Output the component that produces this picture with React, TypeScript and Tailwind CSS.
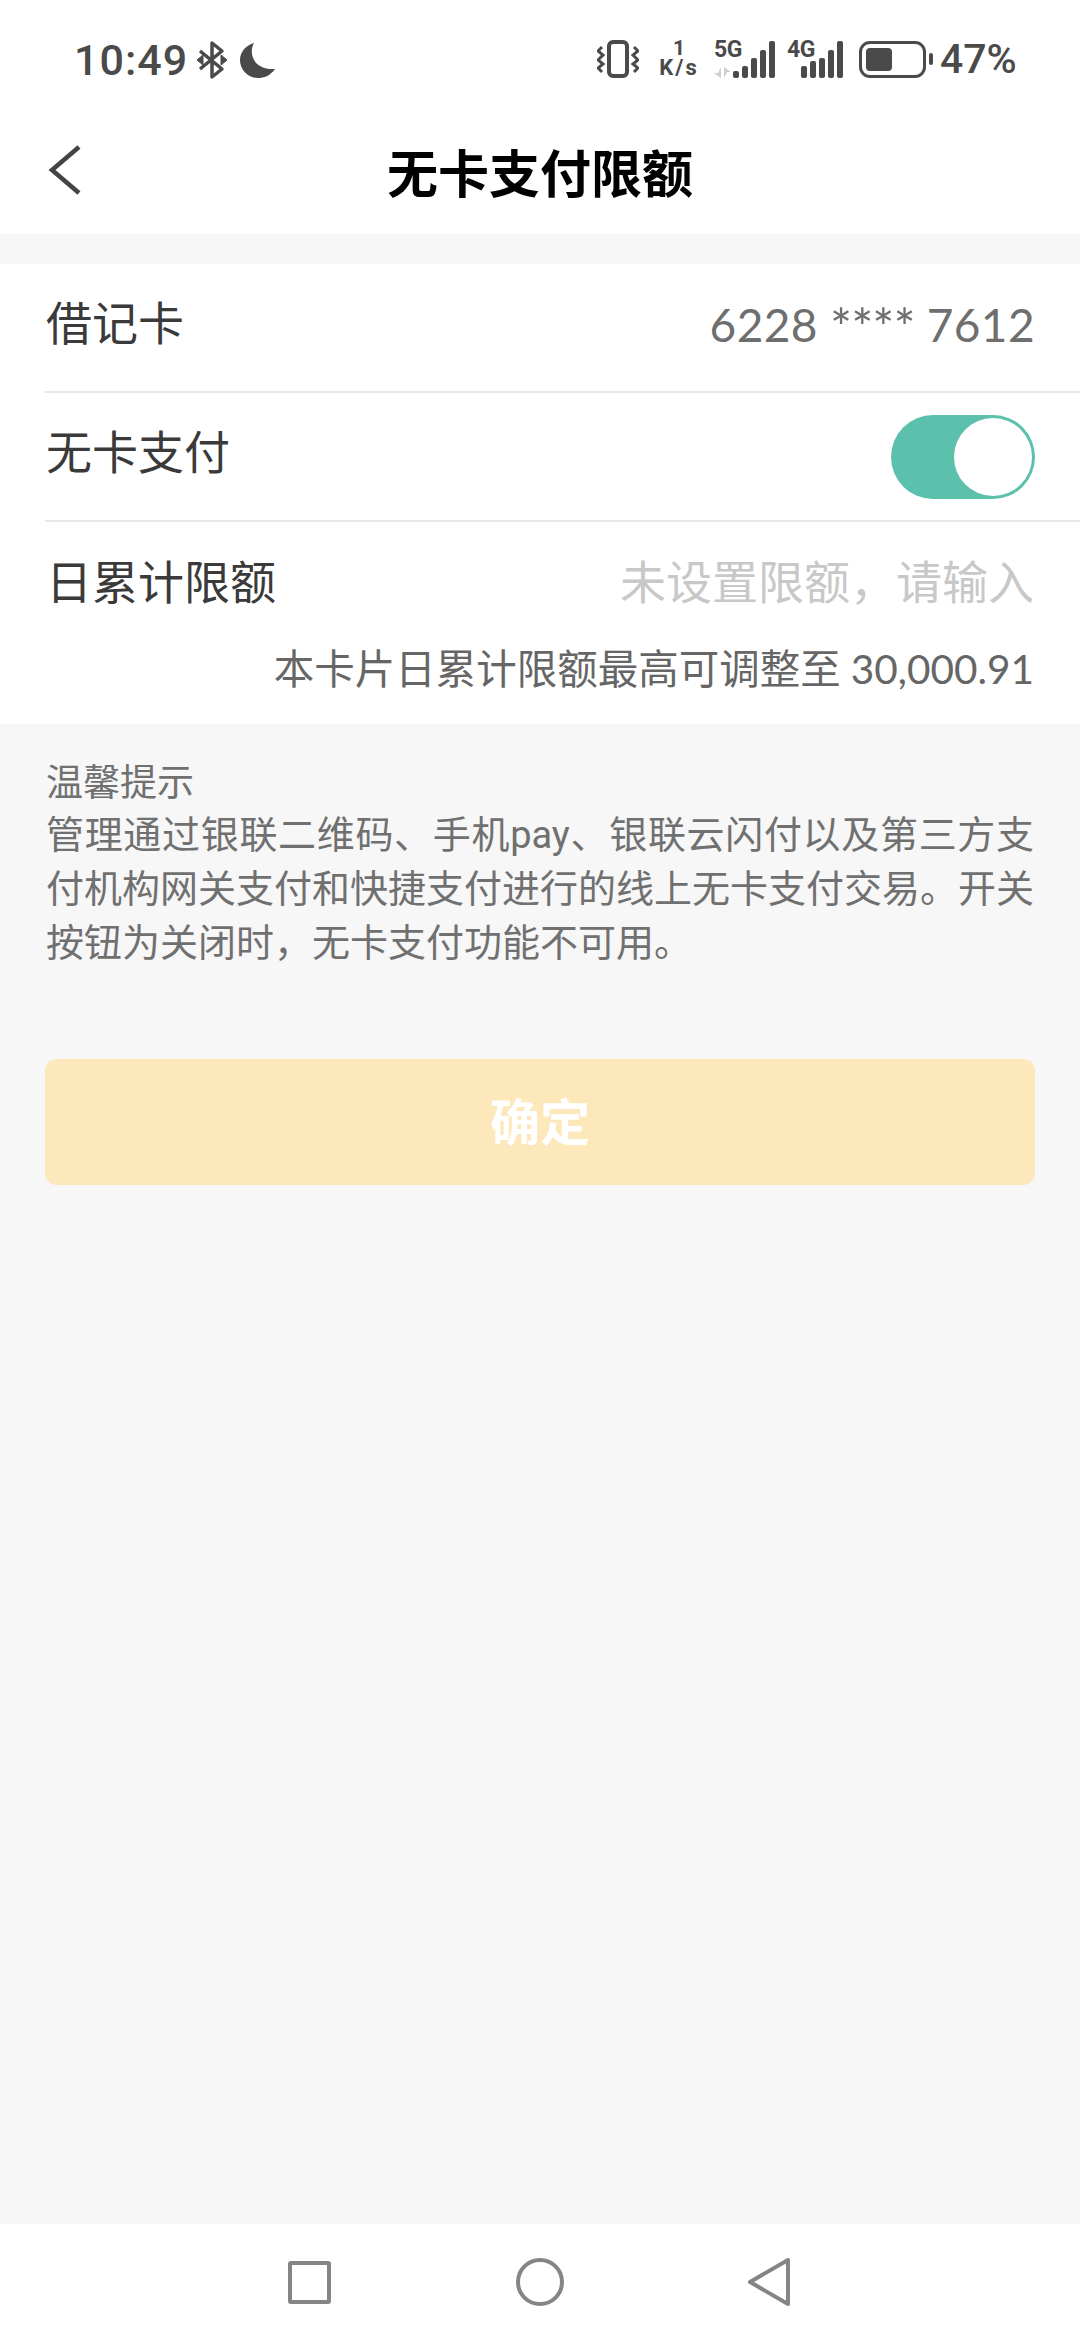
const cjk = "font-['Roboto','Noto_Sans_CJK_SC',sans-serif]"

function SignalBars({ bars }: { bars: number[] }) {
    return (
        <div className="flex items-end gap-[3px]">
            {bars.map((h, i) => (
                <div key={i} className="w-[6px] rounded-[2px] bg-[#4a4a4a]" style={{ height: h }} />
            ))}
        </div>
    )
}

function StatusBar() {
    return (
        <div className="flex h-[78px] items-start justify-between pt-[40px] pl-[74px] pr-[66px] box-content">
            <div className="flex items-center">
                <span className="font-['Roboto',sans-serif] text-[43px] leading-[38px] font-medium tracking-[1px] text-[#4a4a4a]">10:49</span>
                <svg className="ml-[9px]" width="30" height="40" viewBox="0 0 30 40" fill="none" stroke="#4a4a4a" strokeWidth="3.5" strokeLinejoin="round">
                    <path d="M3 11 L25 29 L15 37 V3 L25 11 L3 29" />
                    <path d="M0 20 L6 15 V25 Z M30 20 L24 15 V25 Z" fill="#4a4a4a" strokeWidth="1" />
                </svg>
                <svg className="ml-[12px]" width="37" height="37" viewBox="0 0 37 37" fill="#4a4a4a">
                    <path d="M15 1 C9 12 15 28 36 27 C31 34 25 36 19 36 C9 36 1 28 1 18 C1 10 7 3 15 1 Z" />
                </svg>
            </div>
            <div className="flex items-start">
                <svg width="42" height="38" viewBox="0 0 42 38" fill="none" stroke="#4a4a4a" strokeWidth="3">
                    <rect x="12" y="2" width="18" height="34" rx="4" strokeWidth="4" />
                    <path d="M5 7 L1 11 L6 15 L1 20 L6 24 L1 28 L5 32 M37 7 L41 11 L36 15 L41 20 L36 24 L41 28 L37 32" />
                </svg>
                <div className="ml-[20px] flex w-[40px] flex-col items-center font-['Roboto',sans-serif] font-bold text-[#4a4a4a]">
                    <span className="text-[21px] leading-[17px]">1</span>
                    <span className="text-[22px] leading-[21px] tracking-[2px] whitespace-nowrap">K/s</span>
                </div>
                <div className="relative ml-[15px] h-[38px] w-[61px]">
                    <span className="absolute left-0 top-0 font-['Roboto',sans-serif] text-[23px] leading-[20px] font-bold tracking-[-0.5px] text-[#4a4a4a]">5G</span>
                    <svg className="absolute left-0 bottom-0" width="17" height="11" viewBox="0 0 17 11" fill="#cfcfcf">
                        <path d="M7 0 V11 L0 6 H4 Z M10 11 V0 L17 5 H13 Z" />
                    </svg>
                    <div className="absolute right-0 bottom-0">
                        <SignalBars bars={[7, 12, 20, 28, 37]} />
                    </div>
                </div>
                <div className="relative ml-[12px] h-[38px] w-[56px]">
                    <span className="absolute left-0 top-0 font-['Roboto',sans-serif] text-[23px] leading-[20px] font-bold tracking-[-0.5px] text-[#4a4a4a]">4G</span>
                    <div className="absolute right-0 bottom-0">
                        <SignalBars bars={[12, 17, 20, 28, 37]} />
                    </div>
                </div>
                <div className="ml-[16px] flex h-[38px] items-center">
                    <div className="flex h-[37px] w-[67px] items-center rounded-[11px] border-[3px] border-[#4a4a4a] pl-[4px]">
                        <div className="h-[23px] w-[26px] rounded-[4px] bg-[#4a4a4a]" />
                    </div>
                    <div className="ml-[3px] h-[12px] w-[4px] rounded-[2px] bg-[#4a4a4a]" />
                </div>
                <span className="ml-[7px] w-[74px] font-['Roboto',sans-serif] text-[41px] leading-[38px] font-medium whitespace-nowrap text-[#4a4a4a]">47%</span>
            </div>
        </div>
    )
}

export default function App() {
    return (
        <div className={`flex h-[2340px] w-[1080px] flex-col bg-[#f7f7f7] ${cjk}`}>
            <div className="bg-white">
                <StatusBar />
                {/* Header */}
                <div className="relative flex h-[116px] items-center justify-center">
                    <svg className="absolute left-[46px] top-[26px]" width="38" height="54" viewBox="0 0 38 54" fill="none" stroke="#444444" strokeWidth="4.5">
                        <path d="M33 3 L6 26 L33 49" />
                    </svg>
                    <h1 className="text-[51px] font-bold text-black">无卡支付限额</h1>
                </div>
            </div>

            <div className="mt-[30px] bg-white">
                <div className="flex h-[127px] items-center justify-between pr-[45px] pl-[46px] pb-[6px]">
                    <span className="text-[46px] text-[#3a3a3a]">借记卡</span>
                    <span className="font-['Lato',sans-serif] text-[46px] tracking-[0.4px] text-[#6e6e6e]">
                        6228 <span className="align-[-5px] text-[52px] leading-none tracking-[-1px]">****</span> 7612
                    </span>
                </div>
                <div className="ml-[45px] h-[2px] bg-[#e8e8e8]" />
                <div className="flex h-[127px] items-center justify-between pr-[45px] pl-[46px]">
                    <span className="text-[46px] text-[#3a3a3a] -mt-[6px]">无卡支付</span>
                    <div className="flex h-[84px] w-[144px] items-center justify-end rounded-full bg-[#5bc0ac] pr-[3px]">
                        <div className="h-[78px] w-[78px] rounded-full bg-white" />
                    </div>
                </div>
                <div className="ml-[45px] h-[2px] bg-[#e8e8e8]" />
                <div className="flex h-[122px] items-center justify-between pr-[46px] pl-[46px]">
                    <span className="text-[46px] text-[#3a3a3a]">日累计限额</span>
                    <span className="text-[46px] text-[#c8c8c8]">未设置限额，请输入</span>
                </div>
                <div className="h-[80px] pr-[46px] text-right text-[40.5px] leading-[50px] text-[#666666]">
                    本卡片日累计限额最高可调整至 <span className="font-['Lato',sans-serif]">30,000.91</span>
                </div>
            </div>

            <div className="px-[46px] pt-[36px] text-[#707070]">
                <p className="text-[37px] leading-[48px]">温馨提示</p>
                <p className="text-justify text-[38px] leading-[54px]">
                    管理通过银联二维码、手机pay、银联云闪付以及第三方支付机构网关支付和快捷支付进行的线上无卡支付交易。开关按钮为关闭时，无卡支付功能不可用。
                </p>
            </div>

            <button className="mx-[45px] mt-[89px] h-[126px] rounded-[12px] bg-[#fce8ba] pt-[4px] text-[50px] font-bold text-white">确定</button>

            {/* Nav bar */}
            <div className="mt-auto flex h-[116px] items-center bg-white pl-[288px]">
                <div className="h-[43px] w-[43px] rounded-[3px] border-[4px] border-[#858585]" />
                <div className="ml-[185px] h-[48px] w-[48px] rounded-full border-[4px] border-[#858585]" />
                <svg className="ml-[184px]" width="42" height="48" viewBox="0 0 42 48" fill="none" stroke="#858585" strokeWidth="4" strokeLinejoin="round">
                    <path d="M40 2 V46 L2 24 Z" />
                </svg>
            </div>
        </div>
    )
}
